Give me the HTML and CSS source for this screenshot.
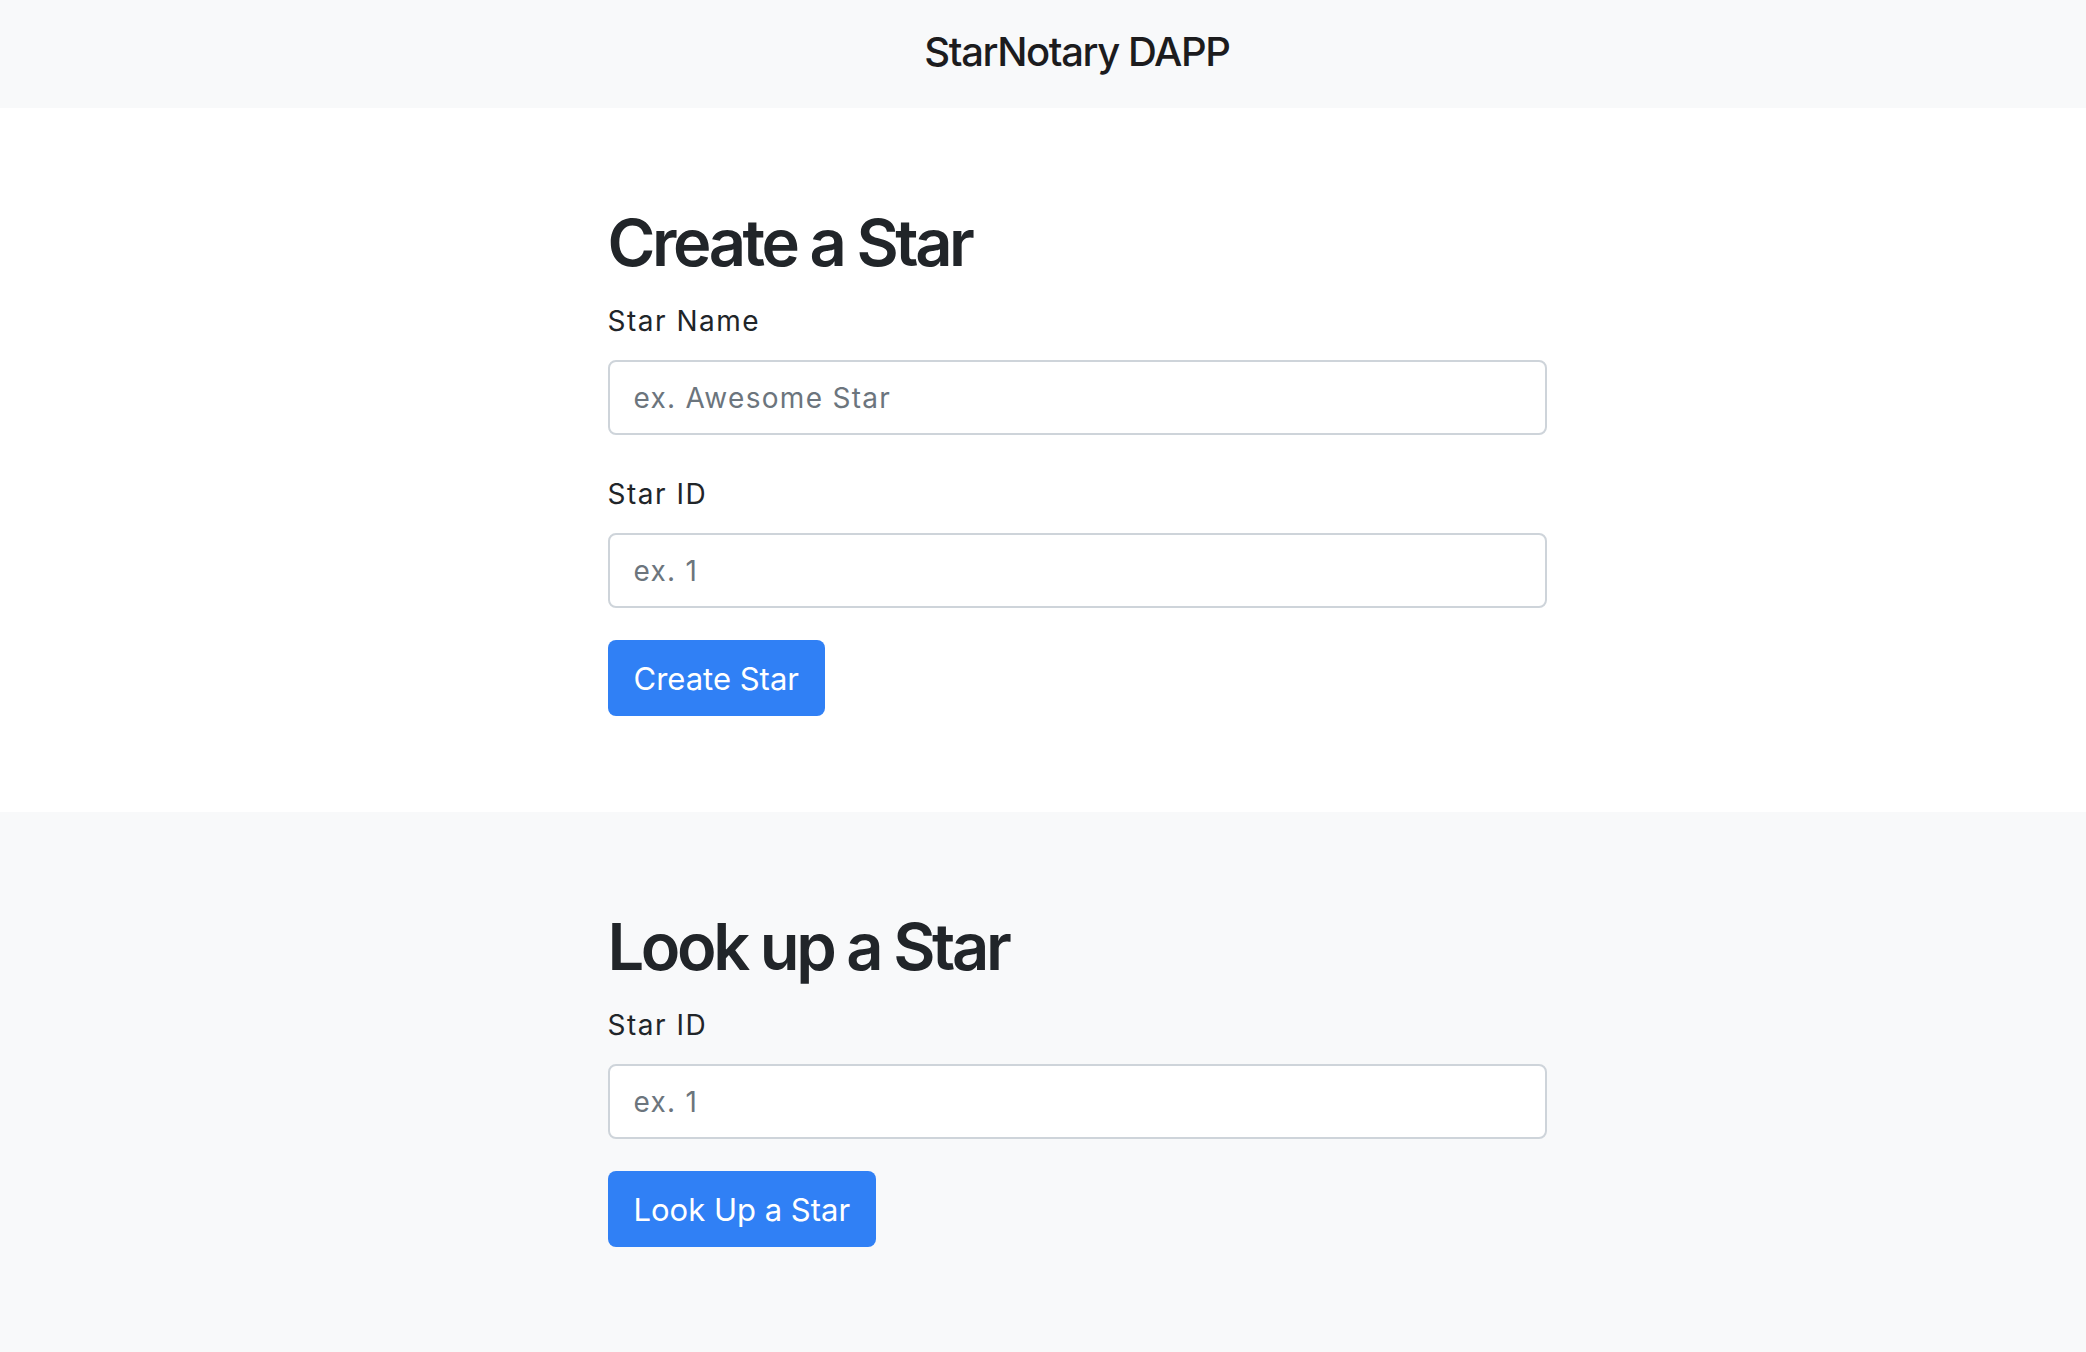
FILE: index.html
```html
<!DOCTYPE html>
<html lang="en">
<head>
<meta charset="utf-8">
<title>StarNotary DAPP</title>
<link rel="stylesheet" href="styles.css">
</head>
<body>
  <header class="topbar">
    <div class="container">
      <h1 class="brand">StarNotary DAPP</h1>
    </div>
  </header>

  <section class="panel panel-white">
    <div class="container">
      <h2 class="panel-title">Create a Star</h2>
      <div class="field">
        <label class="field-label" for="starName">Star Name</label>
        <input class="field-input" id="starName" type="text" placeholder="ex. Awesome Star">
      </div>
      <div class="field">
        <label class="field-label" for="starId">Star ID</label>
        <input class="field-input" id="starId" type="text" placeholder="ex. 1">
      </div>
      <button class="btn" type="button">Create Star</button>
    </div>
  </section>

  <section class="panel panel-gray">
    <div class="container">
      <h2 class="panel-title">Look up a Star</h2>
      <div class="field">
        <label class="field-label" for="lookId">Star ID</label>
        <input class="field-input" id="lookId" type="text" placeholder="ex. 1">
      </div>
      <button class="btn" type="button">Look Up a Star</button>
    </div>
  </section>
</body>
</html>
```

FILE: styles.css
```css
html, body {
  margin: 0;
  padding: 0;
}

body {
  font-family: Inter, "Noto Sans", "Liberation Sans", sans-serif;
  color: #212529;
  background: #f8f9fa;
  min-height: 1352px;
}

.container {
  width: 939px;
  margin: 0 auto;
  position: relative;
  left: 34px;
}

.topbar {
  background: #f8f9fa;
  height: 108px;
  box-sizing: border-box;
  padding-top: 28px;
}

.brand {
  margin: 0;
  text-align: center;
  font-size: 40px;
  line-height: 48px;
  font-weight: 500;
  letter-spacing: -1.4px;
  color: #1c1c1e;
}

.panel {
  padding: 96px 0;
}

.panel-white {
  background: #ffffff;
}

.panel-gray {
  background: #f8f9fa;
}

.panel-title {
  margin: 0 0 18px;
  font-size: 65px;
  line-height: 78px;
  font-weight: 600;
  letter-spacing: -3.4px;
  color: #212529;
}

.field {
  display: flex;
  flex-direction: column;
  margin-bottom: 32px;
}

.field + .field {
  padding-top: 6px;
}

.field-label {
  font-size: 28px;
  line-height: 42px;
  margin-bottom: 18px;
  letter-spacing: 1.5px;
  color: #212529;
}

.field-input {
  box-sizing: border-box;
  width: 100%;
  height: 75px;
  border: 2px solid #ced4da;
  border-radius: 8px;
  background: #ffffff;
  padding: 0 24px;
  font-family: inherit;
  font-size: 28px;
  letter-spacing: 1.3px;
  color: #495057;
  outline: none;
}

.field-input::placeholder {
  color: #6c757d;
  opacity: 1;
}

.btn {
  display: block;
  box-sizing: border-box;
  height: 76px;
  padding: 0 26px;
  border: none;
  border-radius: 8px;
  background: #3080f5;
  color: #ffffff;
  font-family: inherit;
  font-size: 31px;
  font-weight: 400;
  cursor: pointer;
}
```
